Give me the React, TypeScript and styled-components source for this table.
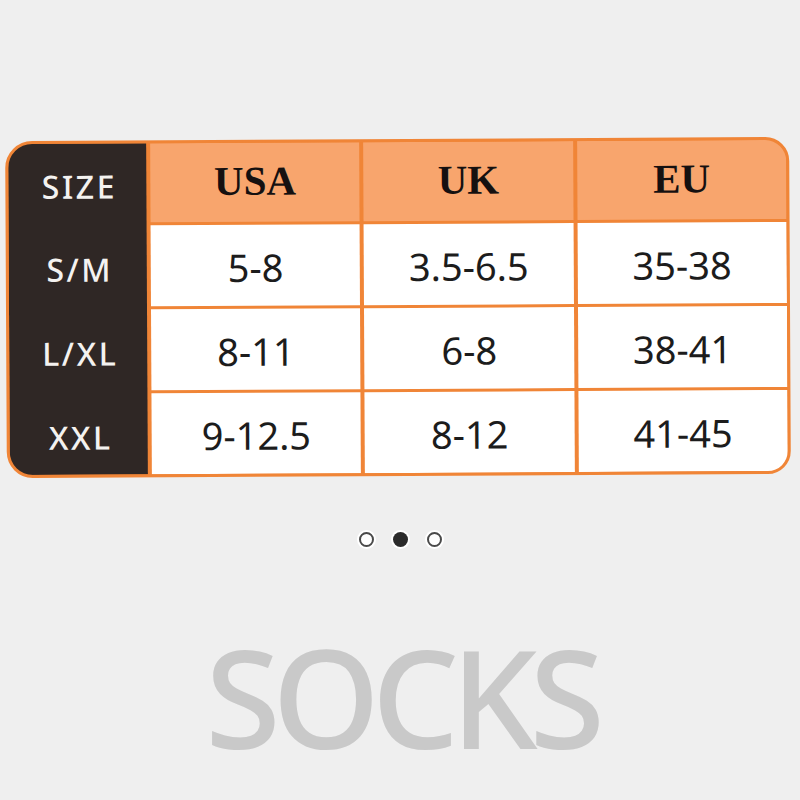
import { createGlobalStyle } from "styled-components"
import styled from "styled-components"

const GlobalStyle = createGlobalStyle`
  html, body {
    margin: 0;
    padding: 0;
    background: #efefef;
  }
`

const ORANGE = "#f08537"

interface Row {
  size: string
  usa: string
  uk: string
  eu: string
}

const rows: Row[] = [
  { size: "S/M", usa: "5-8", uk: "3.5-6.5", eu: "35-38" },
  { size: "L/XL", usa: "8-11", uk: "6-8", eu: "38-41" },
  { size: "XXL", usa: "9-12.5", uk: "8-12", eu: "41-45" },
]

const Page = styled.div`
  width: 800px;
  height: 800px;
  overflow: hidden;
  padding-top: 139px;
  box-sizing: border-box;
  display: flex;
  flex-direction: column;
  align-items: flex-start;
`

const Chart = styled.div`
  margin-left: 6px;
  width: 784px;
  box-sizing: border-box;
  border: 3px solid ${ORANGE};
  border-radius: 27px 24px 23px 26px;
  overflow: hidden;
  background: ${ORANGE};
  display: grid;
  grid-template-columns: 138px 1fr 1fr 1fr;
  grid-template-rows: 79px 81px 81px 81px;
  column-gap: 4px;
  row-gap: 3px;
  transform: rotate(-0.3deg);
`

const SizeColumn = styled.div`
  grid-row: 1 / -1;
  grid-column: 1;
  background: #2f2725;
  display: grid;
  grid-template-rows: 79px 81px 81px 81px;
  row-gap: 3px;
`

const SizeLabel = styled.div`
  display: flex;
  align-items: center;
  justify-content: center;
  padding-left: 4px;
  color: #f4f2f0;
  font-family: "Noto Sans", "Open Sans", sans-serif;
  font-weight: 500;
  font-size: 32px;
  letter-spacing: 2.5px;
  padding-top: 6px;
`

const HeadCell = styled.div`
  background: #f8a56d;
  display: flex;
  align-items: center;
  justify-content: center;
  color: #151010;
  font-family: "Liberation Serif", "Times New Roman", serif;
  font-weight: bold;
  font-size: 41px;
  padding-bottom: 4px;
`

const Cell = styled.div`
  background: #ffffff;
  display: flex;
  align-items: center;
  justify-content: center;
  color: #1c1c1c;
  font-family: "Noto Sans", "Open Sans", sans-serif;
  font-size: 38px;
  padding-top: 2px;
`

const Dots = styled.div`
  align-self: center;
  margin-top: 56px;
  display: flex;
  gap: 19px;
  align-items: center;
`

const Dot = styled.span<{ $active?: boolean }>`
  width: 15px;
  height: 15px;
  box-sizing: border-box;
  border-radius: 50%;
  background: ${p => (p.$active ? "#2b2b2b" : "#ffffff")};
  border: ${p => (p.$active ? "none" : "2.5px solid #4a4a4a")};
  box-shadow: 0 0 0 2px #ffffff;
`

const Title = styled.div`
  align-self: center;
  margin-top: 81px;
  margin-left: 2px;
  color: #c9c9c9;
  font-family: "Noto Sans", "Open Sans", sans-serif;
  font-weight: 500;
  font-size: 137px;
  letter-spacing: -8px;
  line-height: 1;
`

export default function App() {
  return (
    <Page>
      <GlobalStyle />
      <Chart>
        <SizeColumn>
          <SizeLabel>SIZE</SizeLabel>
          {rows.map(r => (
            <SizeLabel key={r.size}>{r.size}</SizeLabel>
          ))}
        </SizeColumn>
        <HeadCell>USA</HeadCell>
        <HeadCell>UK</HeadCell>
        <HeadCell>EU</HeadCell>
        {rows.map(r => [
          <Cell key={r.size + "usa"}>{r.usa}</Cell>,
          <Cell key={r.size + "uk"}>{r.uk}</Cell>,
          <Cell key={r.size + "eu"}>{r.eu}</Cell>,
        ])}
      </Chart>
      <Dots>
        <Dot />
        <Dot $active />
        <Dot />
      </Dots>
      <Title>SOCKS</Title>
    </Page>
  )
}
